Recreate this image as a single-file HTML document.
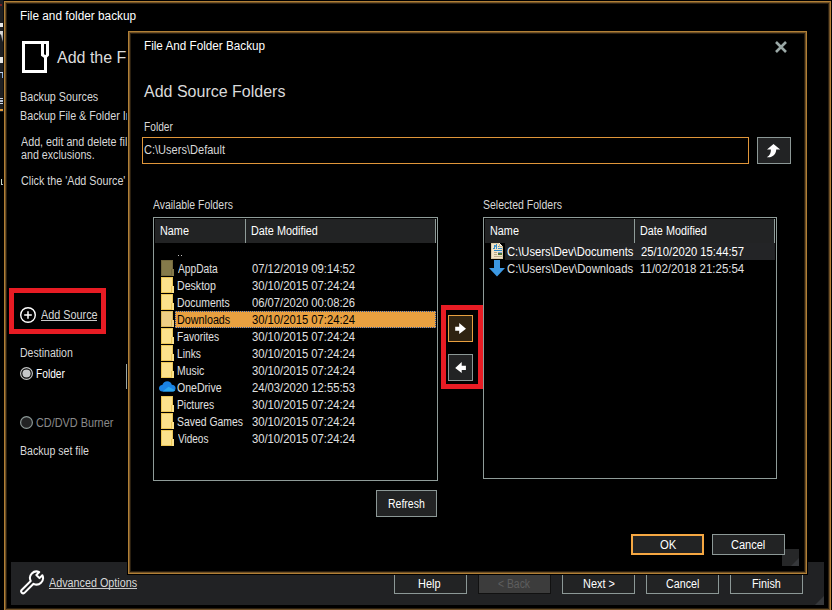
<!DOCTYPE html>
<html><head><meta charset="utf-8"><style>
html,body{margin:0;padding:0;background:#000;width:832px;height:610px;overflow:hidden;position:relative}
body>*{position:absolute;box-sizing:content-box}
.t{font-family:'Liberation Sans', sans-serif;white-space:pre;line-height:normal;transform-origin:0 0}
.btn{border:1px solid #8c9896;background:#222324}
</style></head><body>
<div style="left:0px;top:0px;width:3px;height:112px;background:#1f2023"></div>
<div style="left:3px;top:0px;width:1px;height:112px;background:#0b0d0f"></div>
<div style="left:0px;top:109px;width:3px;height:2px;background:#e09a3a"></div>
<div style="left:0px;top:4px;width:2px;height:2px;background:#7a2020"></div>
<div style="left:0px;top:23px;width:3px;height:4px;background:#e8e8e8"></div>
<svg style="left:0px;top:31px" width="3" height="11" viewBox="0 0 3 11"><path d="M0 0 H3 L2.6 11 L1.2 4 L0 3 Z" fill="#d8d8d8"/></svg>
<div style="left:0px;top:57px;width:3px;height:6px;background:#e8e8e8"></div>
<div style="left:0px;top:72px;width:3px;height:1px;background:#c8d8f0"></div>
<div style="left:2px;top:73px;width:1px;height:5px;background:#8ab0e0"></div>
<div style="left:0px;top:98px;width:3px;height:1px;background:#d0d8e8"></div>
<div style="left:0px;top:100px;width:3px;height:2px;background:#b8c4d8"></div>
<div style="left:0px;top:103px;width:3px;height:1px;background:#d0d8e8"></div>
<div style="left:1px;top:179px;width:1px;height:6px;background:#c8d8c8"></div>
<div style="left:2px;top:184px;width:1px;height:1px;background:#b0c0d0"></div>
<div style="left:4px;top:1px;width:825px;height:608px;border:1px solid #b18036;box-shadow:inset 0 0 0 1px #6f5026, inset 0 0 0 2px #2a1f10;background:#000"></div>
<div class="t" style="left:20.02px;top:9px;font-size:12px;color:#ffffff;transform:scaleX(0.9829);">File and folder backup</div>
<svg style="left:22px;top:41px" width="28" height="33" viewBox="0 0 28 33">
<path d="M1.5 1.5 H25.5 V14 L23.5 16 V30.5 H1.5 Z" fill="none" stroke="#fff" stroke-width="3"/>
<path d="M20.5 1.5 V14 L23.5 16" fill="none" stroke="#fff" stroke-width="3"/>
</svg>
<div class="t" style="left:57.00px;top:49px;font-size:16px;color:#dcdcdc;transform:scaleX(1.0000);">Add the Files and Folders to back up</div>
<div class="t" style="left:20.10px;top:90px;font-size:12px;color:#d8d8d8;transform:scaleX(0.8953);">Backup Sources</div>
<div class="t" style="left:20.10px;top:109px;font-size:12px;color:#d8d8d8;transform:scaleX(0.8953);">Backup File &amp; Folder Information</div>
<div class="t" style="left:21.00px;top:135px;font-size:12px;color:#d8d8d8;transform:scaleX(0.8953);">Add, edit and delete files, folders</div>
<div class="t" style="left:21.00px;top:148px;font-size:12px;color:#d8d8d8;transform:scaleX(0.8902);">and exclusions.</div>
<div class="t" style="left:21.00px;top:174px;font-size:12px;color:#d8d8d8;transform:scaleX(0.8953);">Click the 'Add Source' button</div>
<div style="left:9px;top:288px;width:87px;height:36px;border:5px solid #e81c24;background:transparent;"></div>
<svg style="left:19px;top:306px" width="18" height="18" viewBox="0 0 18 18">
<circle cx="9" cy="9" r="7.3" fill="none" stroke="#fff" stroke-width="1.4"/>
<path d="M9 5.2 V12.8 M5.2 9 H12.8" stroke="#fff" stroke-width="1.5"/>
</svg>
<div class="t" style="left:41.00px;top:308px;font-size:12px;color:#d8d8d8;transform:scaleX(0.9032);">Add Source</div>
<div style="left:41px;top:320px;width:56px;height:1px;background:#c8c8c8"></div>
<div class="t" style="left:20.12px;top:346px;font-size:12px;color:#d8d8d8;transform:scaleX(0.8793);">Destination</div>
<svg style="left:20px;top:367px" width="13" height="13" viewBox="0 0 13 13"><circle cx="6.5" cy="6.5" r="5.9" fill="none" stroke="#c2c4c4" stroke-width="1.2"/><circle cx="6.5" cy="6.5" r="4.1" fill="#c6c8ca"/></svg>
<div class="t" style="left:36.15px;top:367px;font-size:12px;color:#ffffff;transform:scaleX(0.8485);">Folder</div>
<div style="left:126px;top:364px;width:1px;height:25px;background:#9ca8a6"></div>
<svg style="left:20px;top:416px" width="13" height="13" viewBox="0 0 13 13"><circle cx="6.5" cy="6.5" r="5.9" fill="#222324" stroke="#8c9896" stroke-width="1.2"/></svg>
<div class="t" style="left:36.00px;top:416px;font-size:12px;color:#8a8a8a;transform:scaleX(0.9059);">CD/DVD Burner</div>
<div class="t" style="left:20.12px;top:444px;font-size:12px;color:#d8d8d8;transform:scaleX(0.8831);">Backup set file</div>
<div style="left:11px;top:562px;width:813px;height:43px;background:#212224"></div>
<svg style="left:19px;top:570px" width="27" height="27" viewBox="0 0 27 27">
<path d="M5.48 22.84 L14.54 13.78 A6.5 6.5 0 0 0 23.38 5.23 L20.47 8.14 L17.36 5.03 L20.27 2.11 A6.5 6.5 0 0 0 11.72 10.96 L2.66 20.02 A2 2 0 0 0 5.48 22.84 Z" fill="none" stroke="#fff" stroke-width="2" stroke-linejoin="round"/>
</svg>
<div class="t" style="left:49.00px;top:576px;font-size:12px;color:#d8d8d8;transform:scaleX(0.8980);">Advanced Options</div>
<div style="left:49px;top:588px;width:88px;height:1px;background:#c8c8c8"></div>
<div class="btn" style="left:394px;top:571px;width:71px;height:21px"></div>
<div class="t" style="left:418.09px;top:577px;font-size:12px;color:#ffffff;transform:scaleX(0.9130);">Help</div>
<div class="btn" style="left:562px;top:571px;width:71px;height:21px"></div>
<div class="t" style="left:583.09px;top:577px;font-size:12px;color:#ffffff;transform:scaleX(0.9118);">Next &gt;</div>
<div class="btn" style="left:646px;top:571px;width:71px;height:21px"></div>
<div class="t" style="left:666.00px;top:577px;font-size:12px;color:#ffffff;transform:scaleX(0.8919);">Cancel</div>
<div class="btn" style="left:730px;top:571px;width:71px;height:21px"></div>
<div class="t" style="left:752.10px;top:577px;font-size:12px;color:#ffffff;transform:scaleX(0.9000);">Finish</div>
<div class="btn" style="left:478px;top:571px;width:71px;height:21px;background:#3c3c3c;border-color:#111"></div>
<div class="t" style="left:498.00px;top:577px;font-size:12px;color:#5e5e5e;transform:scaleX(0.8649);">&lt; Back</div>
<svg style="left:814px;top:595px" width="10" height="10" viewBox="0 0 10 10"><path d="M1 10 L10 10 L10 1 Z" fill="#36383b"/></svg>
<div style="left:127px;top:30px;width:679px;height:543px;border:1px solid #000;box-shadow:inset 0 0 0 1px #b18036, inset 0 0 0 2px #6f5026, inset 0 0 0 3px #2a1f10;background:#000"></div>
<div class="t" style="left:144.02px;top:39px;font-size:12px;color:#ffffff;transform:scaleX(0.9756);">File And Folder Backup</div>
<svg style="left:774px;top:40px" width="14" height="14" viewBox="0 0 14 14">
<path d="M2 2 L12 12 M12 2 L2 12" stroke="#9aa8a6" stroke-width="2.6"/></svg>
<div class="t" style="left:144.00px;top:83px;font-size:16px;color:#dadada;transform:scaleX(1.0000);">Add Source Folders</div>
<div class="t" style="left:144.15px;top:120px;font-size:12px;color:#d8d8d8;transform:scaleX(0.8485);">Folder</div>
<div style="left:142px;top:137px;width:605px;height:25px;border:1px solid #e0963a;background:#000;"></div>
<div class="t" style="left:144.00px;top:143px;font-size:12px;color:#d8d8d8;transform:scaleX(0.9205);">C:\Users\Default</div>
<div style="left:757px;top:137px;width:32px;height:25px;border:1px solid #8c9896;background:#222324;"></div>
<svg style="left:764px;top:142px" width="20" height="18" viewBox="0 0 20 18">
<path d="M9.5 2 L16.2 7.6 H12.2 C12.2 11.2 10.2 14.2 6 15.2 L2.8 15.2 C6 13.6 6.9 11.2 6.9 7.6 H3 Z" fill="#fff"/></svg>
<div class="t" style="left:153.00px;top:198px;font-size:12px;color:#d8d8d8;transform:scaleX(0.8696);">Available Folders</div>
<div class="t" style="left:483.12px;top:198px;font-size:12px;color:#d8d8d8;transform:scaleX(0.8764);">Selected Folders</div>
<div style="left:153px;top:217px;width:283px;height:262px;border:1px solid #8f9c99;background:#000;"></div>
<div style="left:155px;top:219px;width:281px;height:24px;background:#222324"></div>
<div style="left:245px;top:219px;width:1px;height:24px;background:#8f9c99"></div>
<div style="left:435px;top:219px;width:1px;height:24px;background:#8f9c99"></div>
<div class="t" style="left:160.10px;top:224px;font-size:12px;color:#ffffff;transform:scaleX(0.9032);">Name</div>
<div class="t" style="left:251.10px;top:224px;font-size:12px;color:#ffffff;transform:scaleX(0.9028);">Date Modified</div>
<div style="left:178px;top:255px;width:1px;height:1px;background:#c0c0c0"></div>
<div style="left:181px;top:255px;width:1px;height:1px;background:#c0c0c0"></div>
<div style="left:161px;top:260px;width:12px;height:16px;background:#857a4a;box-shadow:inset 0 0 0 1px #74693e"></div>
<div style="left:171px;top:269px;width:3px;height:7px;background:#857a4a;box-shadow:inset 1px 0 0 #74693e"></div>
<div class="t" style="left:178.00px;top:262px;font-size:12px;color:#e0e0e0;transform:scaleX(0.8511);">AppData</div>
<div class="t" style="left:252.00px;top:262px;font-size:12px;color:#e0e0e0;transform:scaleX(0.9364);">07/12/2019 09:14:52</div>
<div style="left:161px;top:277px;width:12px;height:16px;background:#fbe18b;box-shadow:inset 0 0 0 1px #ecc655"></div>
<div style="left:171px;top:286px;width:3px;height:7px;background:#fbe18b;box-shadow:inset 1px 0 0 #ecc655"></div>
<div class="t" style="left:177.12px;top:279px;font-size:12px;color:#e0e0e0;transform:scaleX(0.8837);">Desktop</div>
<div class="t" style="left:252.00px;top:279px;font-size:12px;color:#e0e0e0;transform:scaleX(0.9364);">30/10/2015 07:24:24</div>
<div style="left:161px;top:294px;width:12px;height:16px;background:#fbe18b;box-shadow:inset 0 0 0 1px #ecc655"></div>
<div style="left:171px;top:303px;width:3px;height:7px;background:#fbe18b;box-shadow:inset 1px 0 0 #ecc655"></div>
<div class="t" style="left:177.13px;top:296px;font-size:12px;color:#e0e0e0;transform:scaleX(0.8667);">Documents</div>
<div class="t" style="left:252.00px;top:296px;font-size:12px;color:#e0e0e0;transform:scaleX(0.9364);">06/07/2020 00:08:26</div>
<div style="left:175px;top:311px;width:259px;height:15px;background:#e8a040;border:1px dotted #2050a0"></div>
<div style="left:161px;top:311px;width:12px;height:16px;background:#eecf86;box-shadow:inset 0 0 0 1px #dcb85a"></div>
<div style="left:171px;top:320px;width:3px;height:7px;background:#eecf86;box-shadow:inset 1px 0 0 #dcb85a"></div>
<div class="t" style="left:177.10px;top:313px;font-size:12px;color:#000000;transform:scaleX(0.8966);">Downloads</div>
<div class="t" style="left:252.00px;top:313px;font-size:12px;color:#000000;transform:scaleX(0.9364);">30/10/2015 07:24:24</div>
<div style="left:161px;top:328px;width:12px;height:16px;background:#fbe18b;box-shadow:inset 0 0 0 1px #ecc655"></div>
<div style="left:171px;top:337px;width:3px;height:7px;background:#fbe18b;box-shadow:inset 1px 0 0 #ecc655"></div>
<div class="t" style="left:177.15px;top:330px;font-size:12px;color:#e0e0e0;transform:scaleX(0.8542);">Favorites</div>
<div class="t" style="left:252.00px;top:330px;font-size:12px;color:#e0e0e0;transform:scaleX(0.9364);">30/10/2015 07:24:24</div>
<div style="left:161px;top:345px;width:12px;height:16px;background:#fbe18b;box-shadow:inset 0 0 0 1px #ecc655"></div>
<div style="left:171px;top:354px;width:3px;height:7px;background:#fbe18b;box-shadow:inset 1px 0 0 #ecc655"></div>
<div class="t" style="left:177.15px;top:347px;font-size:12px;color:#e0e0e0;transform:scaleX(0.8519);">Links</div>
<div class="t" style="left:252.00px;top:347px;font-size:12px;color:#e0e0e0;transform:scaleX(0.9364);">30/10/2015 07:24:24</div>
<div style="left:161px;top:362px;width:12px;height:16px;background:#fbe18b;box-shadow:inset 0 0 0 1px #ecc655"></div>
<div style="left:171px;top:371px;width:3px;height:7px;background:#fbe18b;box-shadow:inset 1px 0 0 #ecc655"></div>
<div class="t" style="left:177.13px;top:364px;font-size:12px;color:#e0e0e0;transform:scaleX(0.8667);">Music</div>
<div class="t" style="left:252.00px;top:364px;font-size:12px;color:#e0e0e0;transform:scaleX(0.9364);">30/10/2015 07:24:24</div>
<svg style="left:159px;top:381px" width="17" height="11" viewBox="0 0 17 11">
<path d="M3.5 10.5 C1.2 10.5 0 9 0 7.2 C0 5.4 1.5 4 3.3 4.1 C4 1.7 6 0.3 8.3 0.3 C10.6 0.3 12.3 1.8 12.8 3.8 C15 3.8 16.6 5.3 16.6 7.2 C16.6 9 15.3 10.5 13.3 10.5 Z" fill="#1a82e2"/>
<path d="M3.5 10.5 L9.5 5.8 L16.2 9.3 C15.8 10.1 14.8 10.5 13.3 10.5 Z" fill="#2aa6ee"/></svg>
<div class="t" style="left:177.00px;top:381px;font-size:12px;color:#e0e0e0;transform:scaleX(0.8800);">OneDrive</div>
<div class="t" style="left:252.00px;top:381px;font-size:12px;color:#e0e0e0;transform:scaleX(0.9364);">24/03/2020 12:55:53</div>
<div style="left:161px;top:396px;width:12px;height:16px;background:#fbe18b;box-shadow:inset 0 0 0 1px #ecc655"></div>
<div style="left:171px;top:405px;width:3px;height:7px;background:#fbe18b;box-shadow:inset 1px 0 0 #ecc655"></div>
<div class="t" style="left:177.14px;top:398px;font-size:12px;color:#e0e0e0;transform:scaleX(0.8571);">Pictures</div>
<div class="t" style="left:252.00px;top:398px;font-size:12px;color:#e0e0e0;transform:scaleX(0.9364);">30/10/2015 07:24:24</div>
<div style="left:161px;top:413px;width:12px;height:16px;background:#fbe18b;box-shadow:inset 0 0 0 1px #ecc655"></div>
<div style="left:171px;top:422px;width:3px;height:7px;background:#fbe18b;box-shadow:inset 1px 0 0 #ecc655"></div>
<div class="t" style="left:177.13px;top:415px;font-size:12px;color:#e0e0e0;transform:scaleX(0.8667);">Saved Games</div>
<div class="t" style="left:252.00px;top:415px;font-size:12px;color:#e0e0e0;transform:scaleX(0.9364);">30/10/2015 07:24:24</div>
<div style="left:161px;top:430px;width:12px;height:16px;background:#fbe18b;box-shadow:inset 0 0 0 1px #ecc655"></div>
<div style="left:171px;top:439px;width:3px;height:7px;background:#fbe18b;box-shadow:inset 1px 0 0 #ecc655"></div>
<div class="t" style="left:178.00px;top:432px;font-size:12px;color:#e0e0e0;transform:scaleX(0.8333);">Videos</div>
<div class="t" style="left:252.00px;top:432px;font-size:12px;color:#e0e0e0;transform:scaleX(0.9364);">30/10/2015 07:24:24</div>
<div style="left:483px;top:217px;width:292px;height:260px;border:1px solid #8f9c99;background:#000;"></div>
<div style="left:485px;top:219px;width:290px;height:24px;background:#222324"></div>
<div style="left:634px;top:219px;width:1px;height:24px;background:#8f9c99"></div>
<div style="left:774px;top:219px;width:1px;height:24px;background:#8f9c99"></div>
<div class="t" style="left:490.10px;top:224px;font-size:12px;color:#ffffff;transform:scaleX(0.9032);">Name</div>
<div class="t" style="left:640.10px;top:224px;font-size:12px;color:#ffffff;transform:scaleX(0.9028);">Date Modified</div>
<div style="left:505px;top:243px;width:270px;height:17px;background:#232426"></div>
<svg style="left:491px;top:243px" width="12" height="16" viewBox="0 0 12 16" shape-rendering="crispEdges">
<path d="M0 0 H8.5 L12 3.5 V16 H0 Z" fill="#f3e4c8"/>
<path d="M0.5 15.5 V0.5 H8.5 M11.5 3.5 V15.5 H0.5" fill="none" stroke="#dccaa6" stroke-width="1"/>
<path d="M8 0 V4 H12 Z" fill="#fbf3e6"/>
<path d="M8.5 0.5 V3.5 H11.5" fill="none" stroke="#c4b490" stroke-width="1"/>
<rect x="3" y="2" width="1" height="4" fill="#3a90c8"/><rect x="4" y="2" width="1" height="2" fill="#5aa0d0"/><rect x="2" y="5" width="2" height="1" fill="#3a90c8"/><rect x="5" y="1" width="1" height="5" fill="#3a90c8"/><rect x="7" y="3" width="1" height="1" fill="#3a90c8"/>
<rect x="7" y="5" width="4" height="1" fill="#3a90c8"/>
<rect x="3" y="7" width="8" height="1" fill="#2a88c8"/>
<rect x="3" y="9" width="3" height="1" fill="#b8a888"/><rect x="7" y="9" width="4" height="1" fill="#7e9ed8"/>
<rect x="3" y="11" width="3" height="1" fill="#b8a888"/><rect x="7" y="10" width="4" height="2" fill="#4e7236"/>
<rect x="3" y="13" width="8" height="1" fill="#c0b090"/>
</svg>
<svg style="left:489px;top:260px" width="17" height="17" viewBox="0 0 17 17">
<path d="M5 0 H11 V8 H16 L8 16.5 L0 8 H5 Z" fill="#3c98e2"/></svg>
<div class="t" style="left:507.00px;top:245px;font-size:12px;color:#ffffff;transform:scaleX(0.9333);">C:\Users\Dev\Documents</div>
<div class="t" style="left:641.00px;top:245px;font-size:12px;color:#ffffff;transform:scaleX(0.9364);">25/10/2020 15:44:57</div>
<div class="t" style="left:507.00px;top:262px;font-size:12px;color:#e0e0e0;transform:scaleX(0.9403);">C:\Users\Dev\Downloads</div>
<div class="t" style="left:640.05px;top:262px;font-size:12px;color:#e0e0e0;transform:scaleX(0.9537);">11/02/2018 21:25:54</div>
<div style="left:441px;top:305px;width:32px;height:74px;border:5px solid #e81c24;background:transparent;"></div>
<div style="left:448px;top:315px;width:23px;height:25px;border:1px solid #e8a040;background:#2f2311;"></div>
<div style="left:448px;top:354px;width:23px;height:25px;border:1px solid #8c9896;background:#222324;"></div>
<svg style="left:454px;top:323px" width="13" height="12" viewBox="0 0 13 12">
<path d="M1.2 3.8 H5.2 V0 L12 5.8 L5.2 11 V7.8 H1.2 Z" fill="#fff"/></svg>
<svg style="left:454px;top:362px" width="13" height="12" viewBox="0 0 13 12">
<path d="M11.9 3.8 H7.7 V0 L1.2 6 L7.7 11 V8 H11.9 Z" fill="#fff"/></svg>
<div class="btn" style="left:376px;top:490px;width:59px;height:25px"></div>
<div class="t" style="left:388.12px;top:497px;font-size:12px;color:#ffffff;transform:scaleX(0.8750);">Refresh</div>
<div class="btn" style="left:631px;top:534px;width:69px;height:17px;border:2px solid #f5a742"></div>
<div class="t" style="left:660.00px;top:538px;font-size:12px;color:#ffffff;transform:scaleX(0.9412);">OK</div>
<div style="left:782px;top:549px;width:17px;height:17px;background:#262728"></div>
<svg style="left:790px;top:557px" width="9" height="9" viewBox="0 0 9 9"><path d="M1 9 L9 9 L9 1 Z" fill="#36383b"/></svg>
<div class="btn" style="left:712px;top:534px;width:71px;height:19px"></div>
<div class="t" style="left:731.00px;top:538px;font-size:12px;color:#ffffff;transform:scaleX(0.9189);">Cancel</div>
</body></html>
